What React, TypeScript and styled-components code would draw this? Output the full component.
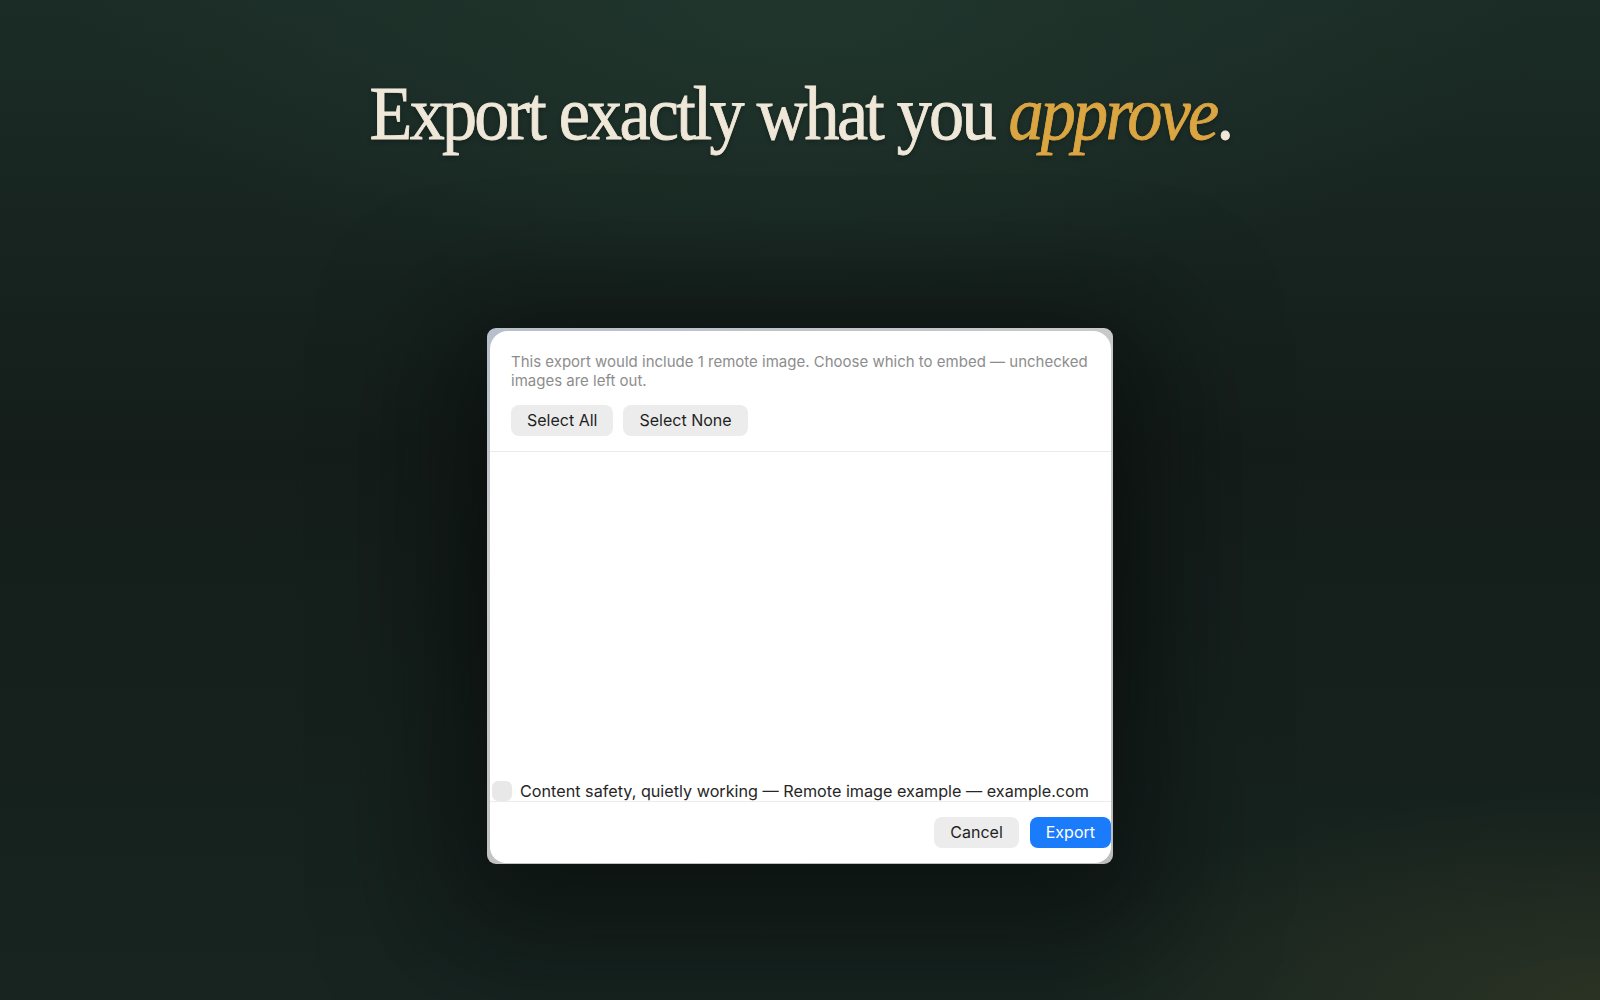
import React from 'react';
import styled, { createGlobalStyle } from 'styled-components';

const GlobalStyle = createGlobalStyle`
  html, body {
    margin: 0;
    padding: 0;
    background: #151f1b;
  }
  * {
    box-sizing: border-box;
  }
`;

const Page = styled.main`
  position: relative;
  width: 100%;
  min-height: 1000px;
  display: flex;
  flex-direction: column;
  align-items: center;
  padding-top: 71px;
  background:
    radial-gradient(ellipse 520px 360px at 800px 600px, rgba(8, 12, 10, 0.55), transparent 75%),
    radial-gradient(ellipse 700px 260px at 1600px 1000px, rgba(58, 62, 38, 0.55), transparent 80%),
    radial-gradient(ellipse 900px 380px at 800px 0px, #20362d, transparent 80%),
    linear-gradient(180deg, #1b2c26 0%, #141d1a 45%, #172420 100%);
  overflow: hidden;
`;

const Headline = styled.h1`
  margin: 0;
  font-family: 'Liberation Serif', 'Times New Roman', serif;
  font-weight: 400;
  font-size: 77px;
  line-height: 1.1;
  letter-spacing: -3px;
  color: #efe8d9;
  -webkit-text-stroke: 0.9px currentColor;
  transform: scaleX(0.91);
  text-shadow: 0 2px 6px rgba(0, 0, 0, 0.35);
`;

const Accent = styled.em`
  font-style: italic;
  color: #dba542;
`;

const Sheet = styled.section`
  margin-top: 172px;
  width: 626px;
  padding: 3px 2px 1px 3px;
  border-radius: 9px;
  background: linear-gradient(160deg, #b7bfcc 0%, #c9c9c9 30%, #bdbdbd 100%);
  box-shadow: 0 30px 120px 40px rgba(5, 8, 7, 0.55);
`;

const Panel = styled.div`
  height: 532px;
  display: flex;
  flex-direction: column;
  background: #ffffff;
  border-radius: 18px 18px 16px 16px;
  overflow: hidden;
  font-family: Inter, 'Liberation Sans', Arial, sans-serif;
`;

const Intro = styled.div`
  padding: 21px 10px 15px 21px;
  border-bottom: 1px solid #ebebeb;
`;

const Description = styled.p`
  margin: 0 0 15px;
  font-size: 15px;
  line-height: 19px;
  color: #8d8d8d;
`;

const ButtonRow = styled.div`
  display: flex;
  gap: 10px;
`;

const Button = styled.button<{ $primary?: boolean }>`
  height: 31px;
  padding: 0 16px;
  border: none;
  border-radius: 8px;
  font-family: inherit;
  font-size: 16px;
  color: ${p => (p.$primary ? '#ffffff' : '#1f1f1f')};
  background: ${p => (p.$primary ? '#1b7cfb' : '#ececec')};
  cursor: default;
`;

const List = styled.div`
  flex: 1;
  display: flex;
  flex-direction: column;
  justify-content: flex-end;
`;

const ImageRow = styled.label`
  display: flex;
  align-items: center;
  gap: 8px;
  height: 21px;
  padding-left: 2px;
  margin-bottom: 1px;
  border-bottom: 1px solid #ececec;
  font-size: 16.2px;
  color: #262626;
`;

const Checkbox = styled.span`
  width: 20px;
  height: 20px;
  border-radius: 6px;
  background: #e8e8e8;
  flex-shrink: 0;
`;

const Footer = styled.div`
  display: flex;
  justify-content: flex-end;
  gap: 11px;
  padding: 14px 0 15px;
`;

export default function App() {
  return (
    <>
      <GlobalStyle />
      <Page>
        <Headline>
          Export exactly what you <Accent>approve</Accent>.
        </Headline>

        <Sheet>
          <Panel>
            <Intro>
              <Description>
                This export would include 1 remote image. Choose which to embed — unchecked
                images are left out.
              </Description>
              <ButtonRow>
                <Button>Select All</Button>
                <Button>Select None</Button>
              </ButtonRow>
            </Intro>

            <List>
              <ImageRow>
                <Checkbox />
                Content safety, quietly working — Remote image example — example.com
              </ImageRow>
            </List>

            <Footer>
              <Button>Cancel</Button>
              <Button $primary>Export</Button>
            </Footer>
          </Panel>
        </Sheet>
      </Page>
    </>
  );
}
